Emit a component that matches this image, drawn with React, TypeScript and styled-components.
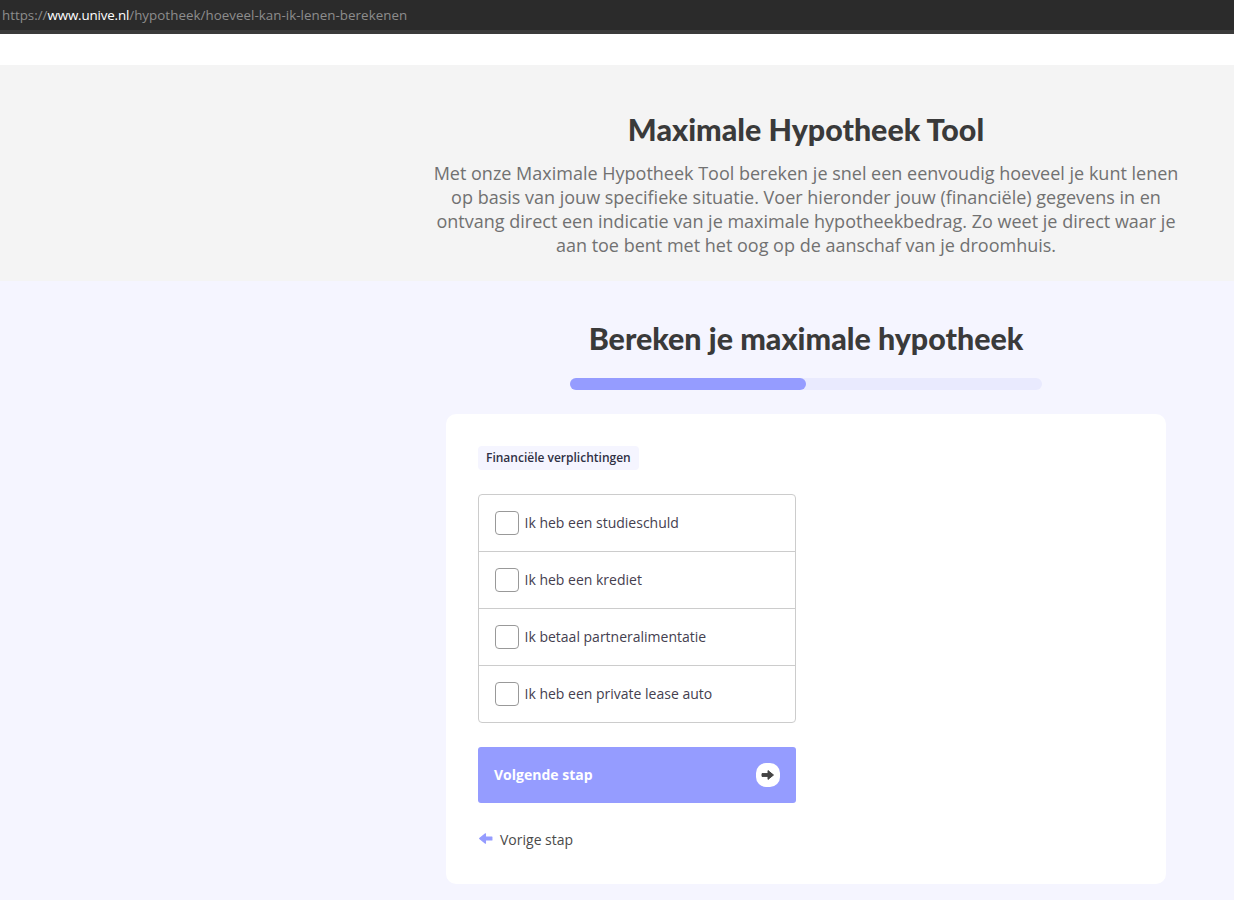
import React from 'react';
import styled, { createGlobalStyle } from 'styled-components';

const GlobalStyle = createGlobalStyle`
  html, body {
    margin: 0;
    padding: 0;
    height: 900px;
    overflow: hidden;
    background: #ffffff;
    font-family: "Open Sans", "Liberation Sans", sans-serif;
  }
`;

const AddressBar = styled.div`
  height: 30px;
  background: #2b2b2b;
  border-bottom: 4px solid #3a3a3a;
  padding-left: 2px;
  display: flex;
  align-items: center;
  font-size: 13.35px;
  color: #8d8d8d;
`;

const Host = styled.span`
  color: #ffffff;
  letter-spacing: -0.15px;
`;

const UrlPath = styled.span`
  letter-spacing: 0.04px;
`;

const TopGap = styled.div`
  height: 31px;
  background: #ffffff;
`;

const IntroSection = styled.section`
  height: 216px;
  box-sizing: border-box;
  background: #f4f4f4;
  padding: 45px 0 0 378px;
  display: flex;
  flex-direction: column;
  align-items: center;
`;

const IntroTitle = styled.h1`
  margin: 0;
  font-family: Lato, "Noto Sans", sans-serif;
  font-size: 30.4px;
  line-height: 38px;
  font-weight: 900;
  color: #3a3a3a;
`;

const IntroText = styled.p`
  margin: 13px 0 0;
  width: 750px;
  font-size: 18px;
  line-height: 24px;
  color: #717171;
  text-align: center;
`;

const FormSection = styled.section`
  height: 619px;
  box-sizing: border-box;
  background: #f5f5ff;
  padding: 38px 0 0 378px;
  display: flex;
  flex-direction: column;
  align-items: center;
`;

const FormTitle = styled.h2`
  margin: 0;
  font-family: Lato, "Noto Sans", sans-serif;
  font-size: 30.4px;
  line-height: 38px;
  font-weight: 900;
  color: #3a3a3a;
`;

const Progress = styled.div`
  margin-top: 21px;
  width: 472px;
  height: 12px;
  border-radius: 6px;
  background: #e9eafe;
`;

const ProgressFill = styled.div<{ $percent: number }>`
  width: ${(p) => p.$percent}%;
  height: 100%;
  border-radius: 6px;
  background: #959cff;
`;

const Card = styled.div`
  margin-top: 24px;
  width: 720px;
  height: 470px;
  box-sizing: border-box;
  background: #ffffff;
  border-radius: 10px;
  padding: 32px;
`;

const Tag = styled.div`
  width: fit-content;
  height: 24px;
  padding: 0 8px;
  border-radius: 4px;
  background: #f5f5ff;
  font-size: 12px;
  font-weight: 600;
  line-height: 24px;
  color: #2f3044;
`;

const OptionList = styled.div`
  margin-top: 24px;
  width: 318px;
  box-sizing: border-box;
  border: 1px solid #cccccc;
  border-radius: 4px;
`;

const OptionRow = styled.label`
  height: 57px;
  box-sizing: border-box;
  padding-left: 16px;
  display: flex;
  align-items: center;
  gap: 5.5px;
  font-size: 14px;
  color: #44404f;
  border-top: 1px solid #cccccc;

  &:first-child {
    height: 56px;
    border-top: none;
  }
`;

const OptionText = styled.span`
  margin-top: -2px;
`;

const CheckBox = styled.span`
  width: 24px;
  height: 24px;
  box-sizing: border-box;
  border: 1px solid #999999;
  border-radius: 4px;
  background: #ffffff;
`;

const NextButton = styled.button`
  margin-top: 24px;
  width: 318px;
  height: 56px;
  padding: 0 16px;
  border: none;
  border-radius: 3px;
  background: #959cff;
  display: flex;
  align-items: center;
  justify-content: space-between;
  font-family: inherit;
  font-size: 14px;
  font-weight: 700;
  color: #ffffff;
`;

const NextLabel = styled.span`
  margin-top: -2px;
`;

const ArrowBadge = styled.span`
  width: 24px;
  height: 24px;
  border-radius: 10px;
  background: #ffffff;
  display: flex;
  align-items: center;
  justify-content: center;
`;

const BackLink = styled.div`
  margin-top: 26px;
  display: flex;
  align-items: center;
  gap: 7px;
  font-size: 14px;
  line-height: 22px;
  color: #4a4a4a;
`;

const BackIcon = styled.span`
  display: flex;
  margin-top: -4px;
`;

// same fat arrow for both buttons, the back link just mirrors it
const FatArrow = ({ color, flip, size = 14 }: { color: string; flip?: boolean; size?: number }) => (
  <svg
    width={size}
    height={size}
    viewBox="0 0 14 14"
    style={flip ? { transform: 'scaleX(-1)' } : undefined}
  >
    <path
      d="M1 5.6h6V2.6l5.5 4.4L7 11.4V8.4H1z"
      fill={color}
      stroke={color}
      strokeLinejoin="round"
    />
  </svg>
);

const options = [
  'Ik heb een studieschuld',
  'Ik heb een krediet',
  'Ik betaal partneralimentatie',
  'Ik heb een private lease auto',
];

export default function App() {
  return (
    <>
      <GlobalStyle />
      <AddressBar>
        https://<Host>www.unive.nl</Host>
        <UrlPath>/hypotheek/hoeveel-kan-ik-lenen-berekenen</UrlPath>
      </AddressBar>
      <TopGap />
      <IntroSection>
        <IntroTitle>Maximale Hypotheek Tool</IntroTitle>
        <IntroText>
          Met onze Maximale Hypotheek Tool bereken je snel een eenvoudig hoeveel je kunt lenen op
          basis van jouw specifieke situatie. Voer hieronder jouw (financiële) gegevens in en
          ontvang direct een indicatie van je maximale hypotheekbedrag. Zo weet je direct waar je
          aan toe bent met het oog op de aanschaf van je droomhuis.
        </IntroText>
      </IntroSection>
      <FormSection>
        <FormTitle>Bereken je maximale hypotheek</FormTitle>
        <Progress>
          <ProgressFill $percent={50} />
        </Progress>
        <Card>
          <Tag>Financiële verplichtingen</Tag>
          <OptionList>
            {options.map((option) => (
              <OptionRow key={option}>
                <CheckBox />
                <OptionText>{option}</OptionText>
              </OptionRow>
            ))}
          </OptionList>
          <NextButton>
            <NextLabel>Volgende stap</NextLabel>
            <ArrowBadge>
              <FatArrow color="#444444" />
            </ArrowBadge>
          </NextButton>
          <BackLink>
            <BackIcon>
              <FatArrow color="#959cff" flip size={15} />
            </BackIcon>
            Vorige stap
          </BackLink>
        </Card>
      </FormSection>
    </>
  );
}
